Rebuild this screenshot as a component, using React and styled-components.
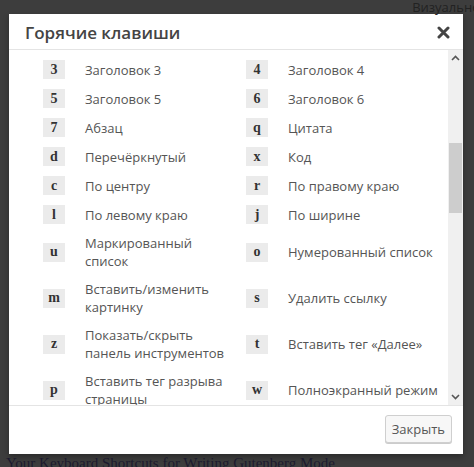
import React, { useEffect, useRef } from "react";
import styled, { createGlobalStyle } from "styled-components";

const GlobalStyle = createGlobalStyle`
  html, body {
    margin: 0;
    padding: 0;
    background: #3d3d3d;
    font-family: "Open Sans", "Noto Sans", sans-serif;
    overflow: hidden;
  }
`;

const shortcuts = [
  ["1", "Заголовок 1", "2", "Заголовок 2"],
  ["3", "Заголовок 3", "4", "Заголовок 4"],
  ["5", "Заголовок 5", "6", "Заголовок 6"],
  ["7", "Абзац", "q", "Цитата"],
  ["d", "Перечёркнутый", "x", "Код"],
  ["c", "По центру", "r", "По правому краю"],
  ["l", "По левому краю", "j", "По ширине"],
  ["u", "Маркированный список", "o", "Нумерованный список"],
  ["m", "Вставить/изменить картинку", "s", "Удалить ссылку"],
  ["z", "Показать/скрыть панель инструментов", "t", "Вставить тег «Далее»"],
  ["p", "Вставить тег разрыва страницы", "w", "Полноэкранный режим"],
  ["h", "Справка", "", ""],
];

function App() {
  const scrollRef = useRef(null);
  const anchorRef = useRef(null);

  useEffect(() => {
    if (scrollRef.current && anchorRef.current) {
      scrollRef.current.scrollTop = anchorRef.current.offsetTop - 5;
    }
  }, []);

  return (
    <Page>
      <GlobalStyle />
      <TopLine>Визуально</TopLine>
      <Dialog>
        <Header>
          <Title>Горячие клавиши</Title>
          <CloseButton aria-label="Закрыть">
            <svg width="13" height="13" viewBox="0 0 13 13">
              <path
                d="M2 2 L11 11 M11 2 L2 11"
                stroke="#444"
                strokeWidth="3"
                strokeLinecap="round"
              />
            </svg>
          </CloseButton>
        </Header>
        <Body>
          <Scroller ref={scrollRef}>
            <Table>
              {shortcuts.map((row, i) => (
                <Row key={row[0] + i} ref={i === 1 ? anchorRef : undefined}>
                  <Key>{row[0]}</Key>
                  <Label>{row[1]}</Label>
                  {row[2] ? <Key>{row[2]}</Key> : <span />}
                  <Label>{row[3]}</Label>
                </Row>
              ))}
            </Table>
          </Scroller>
          <Scrollbar>
            <Arrow>
              <svg width="9" height="6" viewBox="0 0 9 6">
                <path d="M1 5 L4.5 1.5 L8 5" stroke="#555" strokeWidth="1.6" fill="none" />
              </svg>
            </Arrow>
            <Track>
              <Thumb style={{ marginTop: 77, height: 70 }} />
            </Track>
            <Arrow>
              <svg width="9" height="6" viewBox="0 0 9 6">
                <path d="M1 1 L4.5 4.5 L8 1" stroke="#555" strokeWidth="1.6" fill="none" />
              </svg>
            </Arrow>
          </Scrollbar>
        </Body>
        <Footer>
          <Button>Закрыть</Button>
        </Footer>
      </Dialog>
      <BottomLine>Your Keyboard Shortcuts for Writing Gutenberg Mode</BottomLine>
    </Page>
  );
}

const Page = styled.div`
  width: 474px;
  height: 467px;
  overflow: hidden;
`;

const TopLine = styled.div`
  height: 14px;
  line-height: 14px;
  text-align: right;
  margin-right: -6px;
  font-size: 13px;
  color: #222;
`;

const Dialog = styled.div`
  margin-left: 9px;
  width: 454px;
  background: #fff;
  box-shadow: 0 3px 6px rgba(0, 0, 0, 0.3);
`;

const Header = styled.div`
  height: 35px;
  display: flex;
  align-items: center;
  justify-content: space-between;
  padding: 0 13px 0 16px;
  border-bottom: 1px solid #e4e4e4;
`;

const Title = styled.div`
  font-size: 17px;
  font-weight: 600;
  color: #444;
  margin-top: 2px;
`;

const CloseButton = styled.button`
  border: 0;
  background: none;
  padding: 0;
  display: flex;
  margin-top: 1px;
`;

const Body = styled.div`
  display: flex;
  height: 355px;
`;

const Scroller = styled.div`
  position: relative;
  flex: 1;
  overflow: hidden;
  padding-left: 34px;
`;

const Table = styled.div`
  display: flex;
  flex-direction: column;
`;

const Row = styled.div`
  display: grid;
  grid-template-columns: 22px 141px 22px 1fr;
  column-gap: 20px;
  align-items: center;
  padding: 5px 0;
`;

const Key = styled.span`
  width: 22px;
  height: 19px;
  display: flex;
  align-items: center;
  justify-content: center;
  background: #ebebeb;
  font-family: "Liberation Serif", serif;
  font-weight: bold;
  font-size: 14px;
  color: #333;
`;

const Label = styled.span`
  font-size: 13px;
  line-height: 18px;
  color: #555;
`;

const Scrollbar = styled.div`
  width: 15px;
  background: #f0f0f0;
  display: flex;
  flex-direction: column;
`;

const Arrow = styled.div`
  height: 16px;
  display: flex;
  align-items: center;
  justify-content: center;
`;

const Track = styled.div`
  flex: 1;
  display: flex;
  flex-direction: column;
  align-items: center;
`;

const Thumb = styled.div`
  width: 13px;
  background: #cdcdcd;
`;

const Footer = styled.div`
  border-top: 1px solid #e4e4e4;
  height: 49px;
  display: flex;
  justify-content: flex-end;
  align-items: flex-start;
  padding: 9px 11px 0 0;
  box-sizing: border-box;
`;

const Button = styled.button`
  height: 28px;
  padding: 0 6px;
  background: #f7f7f7;
  border: 1px solid #cfcfcf;
  border-radius: 3px;
  box-shadow: 0 1px 0 #ccc;
  font-family: "Open Sans", "Noto Sans", sans-serif;
  font-size: 13px;
  color: #555;
`;

const BottomLine = styled.div`
  margin-top: 1px;
  padding-left: 6px;
  font-family: "Liberation Serif", serif;
  font-size: 15px;
  color: #1c1a2e;
  white-space: nowrap;
`;

export default App;
